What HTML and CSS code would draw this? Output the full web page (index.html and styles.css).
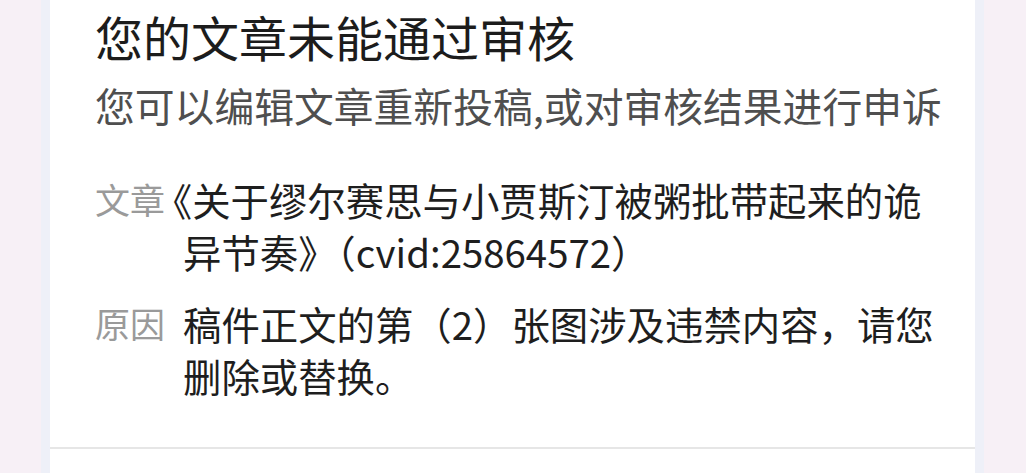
FILE: index.html
```html
<!DOCTYPE html>
<html lang="zh-CN">
<head>
    <meta charset="UTF-8">
    <meta name="viewport" content="width=device-width, initial-scale=1.0">
    <title>审核结果</title>
    <link rel="stylesheet" href="styles.css">
</head>
<body>
    <div class="frame">
        <div class="card">
            <section class="notice">
                <h1 class="notice-title">您的文章未能通过审核</h1>
                <p class="notice-sub">您可以编辑文章重新投稿,或对审核结果进行申诉</p>
                <div class="detail">
                    <span class="detail-label">文章</span>
                    <span class="detail-value hang">《关于缪尔赛思与小贾斯汀被粥批带起来的诡异节奏》（cvid:25864572）</span>
                </div>
                <div class="detail">
                    <span class="detail-label">原因</span>
                    <span class="detail-value">稿件正文的第（2）张图涉及违禁内容，请您删除或替换。</span>
                </div>
            </section>
            <section class="next"></section>
        </div>
    </div>
</body>
</html>
```

FILE: styles.css
```css
html, body {
    height: 100%;
}
body {
    margin: 0;
    background: #f7f0f6;
    font-family: "Noto Sans CJK SC", sans-serif;
    overflow: hidden;
}
.frame {
    height: 100%;
    margin: 0 42px 0 41px;
    padding: 0 9px;
    background: #eef0f8;
}
.card {
    height: 100%;
    background: #ffffff;
}
.notice {
    padding: 8px 30px 46px 45px;
    border-bottom: 2px solid #e6e6e6;
}
.notice-title {
    margin: 0;
    font-size: 48px;
    line-height: 56px;
    font-weight: 400;
    color: #1c1c1c;
}
.notice-sub {
    margin: 15px 0 42px;
    font-size: 39.8px;
    line-height: 52px;
    color: #4f4f4f;
    white-space: nowrap;
}
.detail {
    display: grid;
    grid-template-columns: 72px 1fr;
    column-gap: 16px;
    margin-top: 20px;
}
.detail-label {
    font-size: 35px;
    line-height: 52px;
    color: #9a9a9a;
}
.detail-value {
    font-size: 38.4px;
    line-height: 52px;
    color: #1e1e1e;
}
/* opening bracket sits half out in the gap */
.hang {
    text-spacing-trim: trim-start;
    text-indent: -10px;
}
```
